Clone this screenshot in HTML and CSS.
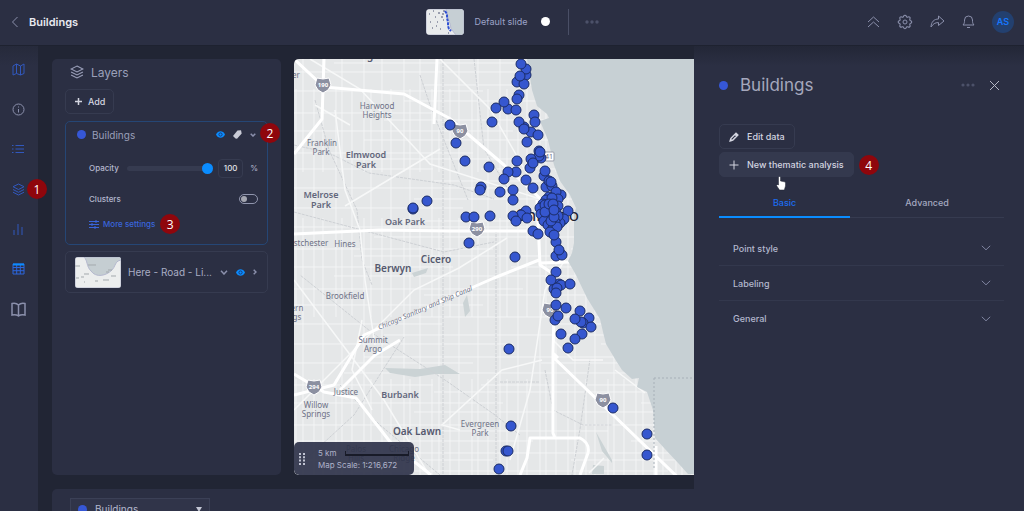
FILE: index.html
```html
<!DOCTYPE html>
<html lang="en">
<head>
<meta charset="utf-8">
<title>Buildings</title>
<link rel="stylesheet" href="styles.css">
</head>
<body>
<div class="app">
  <header class="topbar">
    <div class="topbar-left">
      <button class="icon-btn" aria-label="Back"><svg width="8" height="12" viewBox="0 0 8 12"><path d="M6.500 1 1.500 6l5 5"/></svg></button>
      <h1 class="page-title">Buildings</h1>
    </div>
    <div class="slides">
      <svg class="slide-thumb" viewBox="0 0 38 26" aria-hidden="true">
        <rect width="38" height="26" fill="#e9ebec"/>
        <path d="M20 0c2 4 1 8 3 12s1 7 3 9l4 5h8V0z" fill="#c6cfd4"/>
        <path d="M3 5h1M7 2h1M12 4h2M9 8h1M16 5h2M4 13h1M11 13h1M6 19h1M14 20h1M17 11h1M22 24h1M10 17h1M15 8h2M17 2h2" stroke="#4b5170"/>
        <path d="M19 2l2 3 0 4 1 4 0 4 1 3 2 2" stroke="#3151d3" stroke-width="2" stroke-dasharray="3 1" fill="none"/>
      </svg>
      <span class="slide-name">Default slide</span>
      <span class="slide-dot"></span>
      <span class="divider"></span>
      <button class="icon-btn dim" aria-label="More slides"><svg width="14" height="4" viewBox="0 0 14 4" class="solid"><circle cx="2" cy="2" r="1.700"/><circle cx="7" cy="2" r="1.700"/><circle cx="12" cy="2" r="1.700"/></svg></button>
    </div>
    <div class="tools">
      <button class="icon-btn" aria-label="Collapse"><svg width="13" height="12" viewBox="0 0 13 12"><path d="m1 6 5.500-5L12 6M1 11l5.500-5L12 11"/></svg></button>
      <button class="icon-btn" aria-label="Settings"><svg width="16" height="16" viewBox="0 0 24 24" class="w15"><path d="M10.300 4.300c.4-1.700 3-1.700 3.400 0a1.700 1.700 0 0 0 2.600 1.100c1.500-1 3.300.8 2.400 2.400a1.700 1.700 0 0 0 1 2.500c1.800.4 1.800 3 0 3.400a1.700 1.700 0 0 0-1 2.600c.9 1.500-.9 3.300-2.400 2.400a1.700 1.700 0 0 0-2.600 1c-.4 1.800-3 1.800-3.400 0a1.700 1.700 0 0 0-2.600-1c-1.500.9-3.300-.9-2.400-2.400a1.700 1.700 0 0 0-1-2.600c-1.800-.4-1.800-3 0-3.400a1.700 1.700 0 0 0 1-2.500c-.9-1.600.9-3.400 2.400-2.400a1.700 1.700 0 0 0 2.600-1.100z" transform="translate(-1.500 -1.500) scale(1.120)"/><circle cx="12" cy="12" r="3"/></svg></button>
      <button class="icon-btn" aria-label="Share"><svg width="15" height="13" viewBox="0 0 15 13"><path d="M1 12c.2-5 3-8 7.500-8V1L14 6l-5.500 4.500V7.600C5 7.500 3 9 1 12z"/></svg></button>
      <button class="icon-btn" aria-label="Notifications"><svg width="13" height="15" viewBox="0 0 13 15"><path d="M1 11c1.500-1.500 1.500-3 1.500-5a4 4 0 0 1 8 0c0 2 0 3.500 1.500 5zM5 13.500h3"/></svg></button>
      <button class="avatar">AS</button>
    </div>
  </header>
  <div class="body">
    <nav class="rail" aria-label="Sections">
      <button class="icon-btn blue" aria-label="Map"><svg width="13" height="13" viewBox="0 0 13 13"><path d="M1 3l3.500-2 4 2L12 1v9.500L8.500 12l-4-1.500L1 12zM4.500 1v9.500M8.500 3v9"/></svg></button>
      <button class="icon-btn" aria-label="Info"><svg width="13" height="13" viewBox="0 0 13 13"><circle cx="6.500" cy="6.500" r="5.500"/><path d="M6.500 6v3.500M6.500 3.500v1"/></svg></button>
      <button class="icon-btn blue" aria-label="List"><svg width="12" height="10" viewBox="0 0 12 10"><path d="M3.500 1.500H12M3.500 5H12M3.500 8.500H12M0 1.500h1.500M0 5h1.500M0 8.500h1.500"/></svg></button>
      <button class="icon-btn blue" aria-label="Layers"><svg width="13" height="13" viewBox="0 0 13 13"><path d="m6.500 1 5.500 2.700-5.500 2.800L1 3.700zM1 6.500l5.500 2.800L12 6.500M1 9.200 6.500 12 12 9.200"/></svg><span class="badge badge-rail">1</span></button>
      <button class="icon-btn blue" aria-label="Charts"><svg width="10" height="12" viewBox="0 0 10 12"><path d="M1 12V7M5 12V1M9 12V4"/></svg></button>
      <button class="icon-btn blue" aria-label="Table"><svg width="13" height="12" viewBox="0 0 13 12"><path d="M1 1h11v10H1zM1 4.500h11M1 7.700h11M4.700 2v9M8.300 2v9" stroke="#2c66dd"/><path d="M1 1.500h11" stroke="#0a8cff" stroke-width="2"/></svg></button>
      <button class="icon-btn" aria-label="Guide"><svg width="15" height="15" viewBox="0 0 15 15" class="w15"><path d="M7.500 3C5.500 1 3 1 1 1.500V13c2-.5 4.500-.5 6.500 1 2-1.500 4.500-1.500 6.500-1V1.500C12 1 9.500 1 7.500 3zm0 0v11"/></svg></button>
    </nav>
    <main class="main">
      <section class="layers">
        <h2 class="layers-title"><svg width="14" height="14" viewBox="0 0 13 13"><path d="m6.500 1 5.500 2.700-5.500 2.800L1 3.700zM1 6.500l5.500 2.800L12 6.500M1 9.200 6.500 12 12 9.200"/></svg>Layers</h2>
        <button class="btn add"><svg width="9" height="9" viewBox="0 0 9 9" class="w15"><path d="M4.500 1v7M1 4.500h7"/></svg>Add</button>
        <article class="card card-active">
          <div class="row card-head">
            <span class="dot"></span><span class="layer-name">Buildings</span>
            <button class="icon-btn" aria-label="Visibility"><svg width="9" height="7" viewBox="0 0 9 7"><path d="M0 3.500C2-.8 7-.8 9 3.500 7 7.800 2 7.800 0 3.500z" fill="#0a8cff" stroke="none"/><circle cx="4.500" cy="3.500" r="1.600" stroke="#1c3c78"/></svg></button>
            <button class="icon-btn" aria-label="Labels"><svg width="9" height="9" viewBox="0 0 9 9"><path d="M0 6 4.500.6 8 .3 8.700 3.500 4 8.700 2.500 8.500z" fill="#c9cbd6" stroke="none"/></svg></button>
            <button class="icon-btn" aria-label="Collapse layer"><svg width="6" height="4" viewBox="0 0 6 4" class="w15"><path d="M.7.7 3 3 5.300.7"/></svg></button>
            <span class="badge badge-head">2</span>
          </div>
          <div class="row opacity-row">
            <label for="opacity">Opacity</label>
            <input id="opacity" class="slider" type="range" min="0" max="100" value="100">
            <input class="number" type="text" value="100" aria-label="Opacity percent"><span class="percent">%</span>
          </div>
          <div class="row cluster-row"><label for="clusters">Clusters</label><input id="clusters" class="switch" type="checkbox"></div>
          <div class="row more-row"><a class="more" href="#more"><svg width="10" height="9" viewBox="0 0 10 9"><path d="M0 1.500h10M0 4.500h10M0 7.500h10M7 0v3M3 3v3M6 6v3"/></svg>More settings</a><span class="badge">3</span></div>
        </article>
        <article class="card row base-card">
          <svg class="base-thumb" viewBox="0 0 46 31" aria-hidden="true"><rect width="46" height="31" fill="#eceeee"/><path d="M9 0c4 4 2 9 7 14 5 7 15 5 21-1 3-3 3-7 6-9l3-1V0z" fill="#c5ced2"/><path d="M0 9h5M6 20h3M9 17h5M13 8h8M33 13h4M36 19h5M20 24h3M28 23h6M1 21h3M31 15h3M9 25h1" stroke="#a3a9ad"/></svg>
          <span class="base-name">Here - Road - Li...</span>
          <button class="icon-btn" aria-label="Choose style"><svg width="8" height="5" viewBox="0 0 8 5" class="w15"><path d="M1 .8 4 4 7 .8"/></svg></button>
          <button class="icon-btn" aria-label="Visibility"><svg width="9" height="7" viewBox="0 0 9 7"><path d="M0 3.500C2-.8 7-.8 9 3.500 7 7.800 2 7.800 0 3.500z" fill="#0a8cff" stroke="none"/><circle cx="4.500" cy="3.500" r="1.600" stroke="#1c3c78"/></svg></button>
          <button class="icon-btn" aria-label="Open layer"><svg width="4" height="6" viewBox="0 0 4 6" class="w15"><path d="M.7.7 3 3 .7 5.300"/></svg></button>
        </article>
      </section>
      <section class="map" aria-label="Map">
        <svg class="map-canvas" viewBox="294 59 400 416" preserveAspectRatio="xMinYMin slice">
          <rect class="land" x="294" y="59" width="1200" height="900"/>
          <g fill="#dcdfe0" stroke="none"><path d="M294 66h20l9 42-8 15-21 5zM330 99h10l-2 16 10 17-15-3zM310 159l10 12 22 9-6 5-20-2-12 6z"/><path d="M294 340l20 30-20 20zM395 370l80 4 10 10-85-1zM294 415l20 10-20 20z"/></g>
          <g class="streets" id="streets"></g>
          <g class="green"><path d="M385 368l35 1 25-4 15 9-25 0-20 3-25-4zM412 273l16-5-2 5-12 4zM467 295l3 16-5 6-2-14zM596 432l16 28 0 3-10-12zM593 465l11 1 0 8-12 0z"/></g>
          <g class="rail-lines"><path d="M315 100l14 50 28 60 5 50 10 25M294 145l35 8 40 20 85 12 40 14M420 75l10 30 18 45 20 50M443 59v416M294 212l150 40 50-10M294 470l60-55 50-78M520 435l-25-20-50-35-70-45-75-60M500 382h40M545 370l8 40 30 15h30M590 359l-10 70-8 46M340 385l40 40 60 50M474 59l10 90 30 50M496 230v245"/></g>
          <g class="minor"><path d="M294 410l120-120 45-22 48-30M345 206l95-57M335 110l10 80 15 40 5 50 10 65M440 59l50 50 40 70M460 430l-18-5 60-55 40-10M560 60l-30 18M310 59l50 30 70 75 110 35M350 125l-35-20M565 260l-20 30-15 100-20 70M372 410l-20-40 10-50M604 458l-15 15M615 370l30 23M553 340l20 20h30M294 280l90 120 45 75"/></g>
          <g class="highway"><path d="M294 59l30 28 80 7 45 24 55 47 40 37 20 5M437 59l-3 65M324 59l-2 60-28 35M294 234l85-4 70 1h90l14 5M294 395l40-10 30-50 130-57 45-18M294 374l30 18 32 6 35 45 40 32M537 200l3 65 15 10-2 78 5 5M540 263l30-1M553 353v80l2 5M555 438h-25l-3 20-7 17M555 438h25q10 5 8 15l-8 22M553 357l140 135M656 446v29M400 340l-25 15-35 35"/></g>
          <path class="lake" d="M527 59l5 31 5 16 10 8 2 4-9 3 8 19 6 25 6 16 10 14 6 13-2 6v29l-2 10-4 8 8 14 11 23 13 21 3 13 3 12 9 15 7 11 10 9 7-1-2 9 10 5 6 18 2 28 10 11 14 15 9 10H1494V59z"/>
          <path d="M654 378h840M654 378v92" class="boundary"/>
          <g class="shields"><path d="M317 78l6 1 6-1 2 7-3 5-5 3-5-3-3-5zM454 124l6 1 6-1 2 7-3 5-5 3-5-3-3-5zM471 222l6 1 6-1 2 7-3 5-5 3-5-3-3-5zM308 380l6 1 6-1 2 7-3 5-5 3-5-3-3-5zM544 303l6 1 6-1 2 7-3 5-5 3-5-3-3-5zM597 393l6 1 6-1 2 7-3 5-5 3-5-3-3-5z"/></g>
          <g class="shield-text"><text x="323" y="87">190</text><text x="460" y="133">90</text><text x="477" y="231">290</text><text x="314" y="389">294</text><text x="550" y="312">90</text><text x="603" y="402">90</text></g>
          <rect class="route" x="544" y="152" width="10" height="9" rx="1"/><g class="route-text"><text x="549" y="159">41</text></g>
          <g class="label small"><text x="377" y="109">Harwood</text><text x="377" y="118">Heights</text><text x="322" y="146">Franklin</text><text x="321" y="155">Park</text><text x="311" y="246">stchester</text><text x="345" y="247">Hines</text><text x="345" y="299">Brookfield</text><text x="373" y="343">Summit</text><text x="373" y="352">Argo</text><text x="346" y="395">Justice</text><text x="316" y="408">Willow</text><text x="316" y="417">Springs</text><text x="480" y="427">Evergreen</text><text x="480" y="436">Park</text><text x="297" y="311">ern</text><text x="297" y="320">gs</text><text x="296" y="78">er</text><text x="356" y="452">Palos</text><text x="356" y="461">Hills</text><text x="404" y="452">Chicago</text><text x="404" y="461">Ridge</text></g>
          <g class="label town"><text x="366" y="158">Elmwood</text><text x="366" y="168">Park</text><text x="321" y="198">Melrose</text><text x="321" y="208">Park</text><text x="405" y="225">Oak Park</text><text x="400" y="398">Burbank</text></g>
          <g class="label city"><text x="393" y="272">Berwyn</text><text x="436" y="263">Cicero</text><text x="417" y="435">Oak Lawn</text><text x="353" y="59">Park Ridge</text></g>
          <text class="label canal" transform="translate(426 310) rotate(-23)">Chicago Sanitary and Ship Canal</text>
          <text class="metro" x="547" y="221">Chicago</text>
          <g class="points" id="points"></g>
        </svg>
        <div class="scale">
          <svg width="6" height="12" viewBox="0 0 6 12" class="grip"><path d="M0 1h2M4 1h2M0 4.300h2M4 4.300h2M0 7.600h2M4 7.600h2M0 11h2M4 11h2"/></svg>
          <div class="scale-info"><div class="scale-line"><span>5 km</span><span class="scale-bar"></span></div><div>Map Scale: 1:216,672</div></div>
        </div>
      </section>
      <section class="bottom">
        <button class="bottom-select"><span class="dot"></span><span class="bottom-name">Buildings</span><svg width="6" height="5" viewBox="0 0 6 5"><path d="M0 0h6L3 5z" fill="#c5c8d6" stroke="none"/></svg></button>
      </section>
    </main>
    <aside class="drawer">
      <div class="drawer-head">
        <span class="dot"></span><h2 class="drawer-title">Buildings</h2>
        <button class="icon-btn dim" aria-label="More"><svg width="14" height="4" viewBox="0 0 14 4" class="solid"><circle cx="2" cy="2" r="1.600"/><circle cx="7" cy="2" r="1.600"/><circle cx="12" cy="2" r="1.600"/></svg></button>
        <button class="icon-btn close" aria-label="Close"><svg width="11" height="11" viewBox="0 0 11 11"><path d="m1 1 9 9M10 1l-9 9"/></svg></button>
      </div>
      <div class="actions">
        <button class="btn"><svg width="10" height="10" viewBox="0 0 10 10"><path d="M1.200 8.800 2 6.300l5-5.100 1.800 1.800-5 5zM6 2.300 7.800 4" class="w15"/></svg>Edit data</button>
        <button class="btn btn-hover"><svg width="10" height="10" viewBox="0 0 10 10"><path d="M5 .5v9M.5 5h9"/></svg>New thematic analysis
          <span class="badge badge-new">4</span>
          <svg class="cursor" width="10" height="15" viewBox="0 0 10 15"><path d="M2.500 9V1.500a1 1 0 0 1 2 0V5l4 .8q1 .3 1 1.500V10L8.300 14H3.500L.5 9.500q.6-1.400 2-.5z" fill="#fff" stroke="#222635" stroke-width=".5"/></svg>
        </button>
      </div>
      <div class="tabs" role="tablist"><button class="tab active" role="tab" aria-selected="true">Basic</button><button class="tab" role="tab" aria-selected="false">Advanced</button></div>
      <div class="sections">
        <button class="fold">Point style<svg width="10" height="6" viewBox="0 0 10 6"><path d="m.8.8 4.200 4L9.200.8"/></svg></button>
        <button class="fold">Labeling<svg width="10" height="6" viewBox="0 0 10 6"><path d="m.8.8 4.200 4L9.200.8"/></svg></button>
        <button class="fold">General<svg width="10" height="6" viewBox="0 0 10 6"><path d="m.8.8 4.200 4L9.200.8"/></svg></button>
      </div>
    </aside>
  </div>
</div>
<script src="map.js"></script>
</body>
</html>
```
FILE: styles.css
```css
* { box-sizing: border-box; }
body, h1, h2 { margin: 0; }
body, button, input { font-family: Inter, "Open Sans", sans-serif; font-size: 9px; color: #b4b8ce; }
button { border: 0; background: none; padding: 0; }
svg { display: block; flex: none; fill: none; stroke: currentColor; stroke-width: 1; }
.w15 { stroke-width: 1.5; }
.solid { fill: currentColor; stroke: none; }
.app { height: 100vh; display: flex; flex-direction: column; background: #212534; overflow: hidden; }

.topbar { flex: none; height: 46px; padding: 0 10px 2px 11px; display: grid; grid-template-columns: 1fr auto 1fr; align-items: center; background: #2b2f43; border-bottom: 1px solid #1e2230; }
.topbar-left, .slides, .tools, .row, .btn, .scale, .scale-line { display: flex; align-items: center; }
.topbar-left { gap: 10px; }
.page-title { font-size: 11px; font-weight: 600; color: #e8e9f0; line-height: 16px; }
.icon-btn { color: #8b90ac; position: relative; }
.dim { color: #4c5169; }
.blue { color: #3158bd; }
.slide-thumb { width: 38px; height: 26px; border-radius: 4px; }
.slide-name { margin-left: 11px; font-size: 9px; color: #9da3c8; }
.slide-dot { width: 9px; height: 9px; border-radius: 50%; background: #fff; margin: 0 18px 0 14px; }
.divider { width: 1px; height: 26px; background: #4a4f66; margin-right: 16px; }
.tools { justify-content: flex-end; gap: 17px; }
.avatar { width: 22px; height: 22px; border-radius: 50%; background: #23406f; color: #1677ff; font-size: 9px; font-weight: 600; }

.body { flex: 1; min-height: 0; display: flex; }
.rail { flex: none; width: 38px; padding: 15px 2px 0 0; display: flex; flex-direction: column; align-items: center; gap: 24px; background: linear-gradient(#262a3b, #2b2f43 20px); }
.rail .icon-btn { width: 16px; height: 16px; display: grid; place-items: center; }
.main { flex: 1; min-width: 0; padding: 13px 0 0 14px; display: grid; grid-template-columns: 229px minmax(0, 1fr); grid-template-rows: minmax(0, 1fr) 22px; gap: 14px 13px; }
.badge { width: 20px; height: 20px; flex: none; border-radius: 50%; display: grid; place-items: center; background: #8f060c; color: #fff; font: 12px "Open Sans", sans-serif; }
.badge-rail { position: absolute; left: 17px; top: -2px; }
.badge-head { position: absolute; right: -13px; top: 1px; }
.badge-new { position: absolute; right: -26px; top: 2px; }

.layers { padding: 5px 13px; background: #2b2f43; border-radius: 5px; }
.layers-title { display: flex; align-items: center; gap: 7px; padding-left: 5px; height: 16px; font-size: 12px; font-weight: 400; color: #9a9fb9; }
.btn { position: relative; height: 25px; border: 1px solid #363b50; border-radius: 5px; color: #d3d5e0; font-weight: 500; }
.add { margin: 9px 0 7px; padding: 0 8px; gap: 5px; font-size: 9px; }
.card { border: 1px solid #363b50; border-radius: 5px; }
.card-active { height: 124px; border-color: #254675; }
.row { position: relative; }
.card-head { height: 25px; padding: 0 11px; gap: 8px; }
.dot { width: 9px; height: 9px; flex: none; border-radius: 50%; background: #3657d6; }
.layer-name { flex: 1; margin-left: -2px; font-size: 10px; color: #9a9fb9; }
.opacity-row { height: 42px; padding: 0 9px 0 23px; font-size: 8px; }
.opacity-row label, .cluster-row label { font-size: 8px; font-weight: 500; }
.slider { appearance: none; width: 86px; height: 12px; margin: 0 5px 0 auto; background: none; }
.slider::-webkit-slider-runnable-track { height: 5px; border-radius: 3px; background: #363b50; }
.slider::-webkit-slider-thumb { appearance: none; width: 11px; height: 11px; margin-top: -3px; border-radius: 50%; background: #0a8cff; }
.number { width: 25px; height: 19px; padding: 0; border: 1px solid #363b50; border-radius: 4px; background: none; color: #e0e1e8; text-align: center; font-size: 8px; font-weight: 500; }
.percent { margin-left: 7px; }
.cluster-row { height: 20px; padding: 0 9px 0 23px; justify-content: space-between; }
.switch { appearance: none; width: 19px; height: 10px; margin: 0; padding: 1px; border: 1px solid #9095ad; border-radius: 5px; }
.switch::before { content: ""; display: block; width: 6px; height: 6px; border-radius: 50%; background: #a4a6b0; }
.more-row { height: 30px; padding-left: 23px; gap: 5px; }
.more { display: flex; align-items: center; gap: 4px; color: #3a66dc; font-size: 8px; font-weight: 500; text-decoration: none; }
.base-card { height: 42px; margin-top: 6px; padding: 0 12px 0 9px; gap: 8px; }
.base-thumb { width: 46px; height: 31px; border-radius: 3px; }
.base-name { flex: 1; margin-left: -1px; font-size: 10px; white-space: nowrap; color: #a9adc4; }

.map { position: relative; min-width: 0; border-radius: 5px 0 0 5px; overflow: hidden; }
.map-canvas { width: 100%; height: 100%; stroke: none; }
.map-canvas g { fill: none; }
.land { fill: #e5e7e8; }
.lake { fill: #c7d0d4; }
.map-canvas .streets { stroke: #f6f7f7; opacity: .85; }
.map-canvas .minor { stroke: #f7f8f8; stroke-width: 1.5; }
.map-canvas .highway { stroke: #fff; stroke-width: 3; stroke-linejoin: round; }
.map-canvas .rail-lines { stroke: #cdd0d4; stroke-dasharray: 3 1; }
.map-canvas .green { fill: #cbd3d5; }
.boundary { stroke: #a7b0b8; stroke-dasharray: 2 2; }
.map-canvas .shields { fill: #8c90a1; stroke: #fff; }
.route { fill: #fff; stroke: #9b9fab; }
.map-canvas text { font-family: "Noto Sans", sans-serif; text-anchor: middle; }
.map-canvas .shield-text { font-size: 6px; font-weight: 700; fill: #fff; }
.map-canvas .route-text { font-size: 7px; fill: #6d7186; }
.map-canvas .label { fill: #6d7186; }
.small { font-size: 8px; }
.canal { font-size: 7px; font-style: italic; }
.map-canvas .town { font-size: 9px; font-weight: 600; fill: #62667b; }
.map-canvas .city { font-size: 10px; font-weight: 600; fill: #55596e; }
.metro { font-size: 17px; fill: #1e2130; }
.map-canvas .points { fill: #3657cf; stroke: #1b2c66; }
.scale { position: absolute; left: 0; bottom: 0; padding: 5px 5px 4px; gap: 13px; border-radius: 5px; background: rgba(47, 51, 74, .92); font-size: 8px; line-height: 12px; color: #aeb2c9; }
.grip { stroke-width: 2; color: #c0c3d2; }
.scale-line { gap: 8px; }
.scale-bar { width: 64px; height: 5px; border: solid #181b28; border-width: 0 1px 2px; }
.bottom { grid-column: 1 / -1; padding: 9px 18px; overflow: hidden; background: #2b2f43; border-radius: 5px 0 0; }
.bottom-select { width: 140px; height: 22px; display: flex; align-items: center; padding: 0 7px; gap: 8px; border: 1px solid #3b4056; background: #303449; }
.bottom-name { flex: 1; text-align: left; font-size: 10px; }

.drawer { flex: none; width: 330px; padding: 26px 20px 0 25px; background: linear-gradient(#232737, #2b2f43 20px); }
.drawer-head { display: flex; align-items: center; height: 26px; padding-right: 4px; }
.drawer-title { flex: 1; margin-left: 12px; font-size: 17px; font-weight: 400; color: #a5a8bd; }
.close { margin-left: 14px; color: #b4b7c4; }
.actions { display: flex; flex-direction: column; align-items: flex-start; gap: 3px; padding-top: 26px; }
.actions .btn { padding: 0 9px; gap: 8px; }
.btn-hover { background: #34394e; border-color: #34394e; }
.cursor { position: absolute; left: 56px; top: 23px; }
.tabs { display: flex; margin-top: 11px; border-bottom: 1px solid #363b50; }
.tab { height: 30px; flex: 1; border-bottom: 2px solid transparent; margin-bottom: -1px; color: #a5a9c0; font-weight: 500; }
.tab:first-child { flex: 0 0 46%; }
.tabs .active { color: #1c6cf0; border-color: #0a8cff; }
.sections { padding-top: 13px; }
.fold { width: 100%; height: 35px; padding: 0 13px 0 14px; display: flex; align-items: center; justify-content: space-between; font-weight: 500; border-bottom: 1px solid #33384d; }
.fold:last-child { border: 0; }
.fold svg { color: #7f84a0; }
```
FILE: map.js
```js
const NS = "http://www.w3.org/2000/svg";

// Street grid: irregular spacing, broken into blocks so that streets start and stop.
const steps = [7, 11, 9, 13, 6, 10, 12];
let d = "";
for (let x = 296, i = 0; x < 700; x += steps[i++ % 7]) {
  for (let y = 59, j = i; y < 475; j++) {
    const run = 30 + ((i * 37 + j * 53) % 90);
    if ((i + j) % 4) d += `M${x} ${y}v${run}`;
    y += run;
  }
}
for (let y = 63, i = 0; y < 475; y += steps[(i++ + 2) % 7]) {
  for (let x = 294, j = i; x < 700; j++) {
    const run = 40 + ((i * 41 + j * 59) % 110);
    if ((i + j) % 4) d += `M${x} ${y}h${run}`;
    x += run;
  }
}
const streets = document.createElementNS(NS, "path");
streets.setAttribute("d", d);
document.getElementById("streets").append(streets);

const buildings = [
  [526,75],[526,69],[521,64],[517,82],[524,84],[520,76],[519,95],[517,99],[508,109],[504,102],[496,108],[516,110],[492,122],[534,115],[535,122],
  [524,127],[519,122],[531,132],[524,129],[538,135],[527,142],[539,151],[541,158],[539,156],[540,152],[531,159],[530,168],[533,163],[517,161],[516,172],
  [508,172],[504,179],[526,180],[533,188],[513,190],[500,192],[513,200],[489,167],[544,176],[545,171],[546,187],[549,181],[552,186],[551,182],
  [450,125],[456,143],[465,161],[481,187],[480,190],[427,201],[413,209],[413,208],[466,217],[474,217],[490,216],[469,243],
  [526,211],[521,215],[513,216],[516,221],[527,218],[561,195],[568,211],[564,219],[560,223],[533,231],[538,234],[515,257],
  [556,192],[549,197],[546,200],[558,199],[543,204],[552,198],[540,208],[558,206],[545,205],[549,210],[556,212],[541,214],[547,218],[558,216],
  [551,215],[544,221],[555,222],[548,225],[553,228],[557,227],[550,232],[551,221],[545,212],[554,217],[549,204],[553,204],[554,210],
  [556,242],[554,235],[556,256],[562,255],[559,250],[556,272],[559,284],[554,289],[561,285],[551,280],[557,288],[570,284],[556,293],
  [556,305],[566,308],[555,320],[558,316],[580,311],[589,318],[583,323],[581,322],[575,319],[591,327],[582,334],[575,339],[561,334],[568,348],
  [509,349],[613,408],[647,434],[647,455],[511,426],[506,451],[508,451],[499,469]
];
const layer = document.getElementById("points");
for (const [x, y] of buildings) {
  const c = document.createElementNS(NS, "circle");
  c.setAttribute("cx", x);
  c.setAttribute("cy", y);
  c.setAttribute("r", 5);
  layer.append(c);
}
```
